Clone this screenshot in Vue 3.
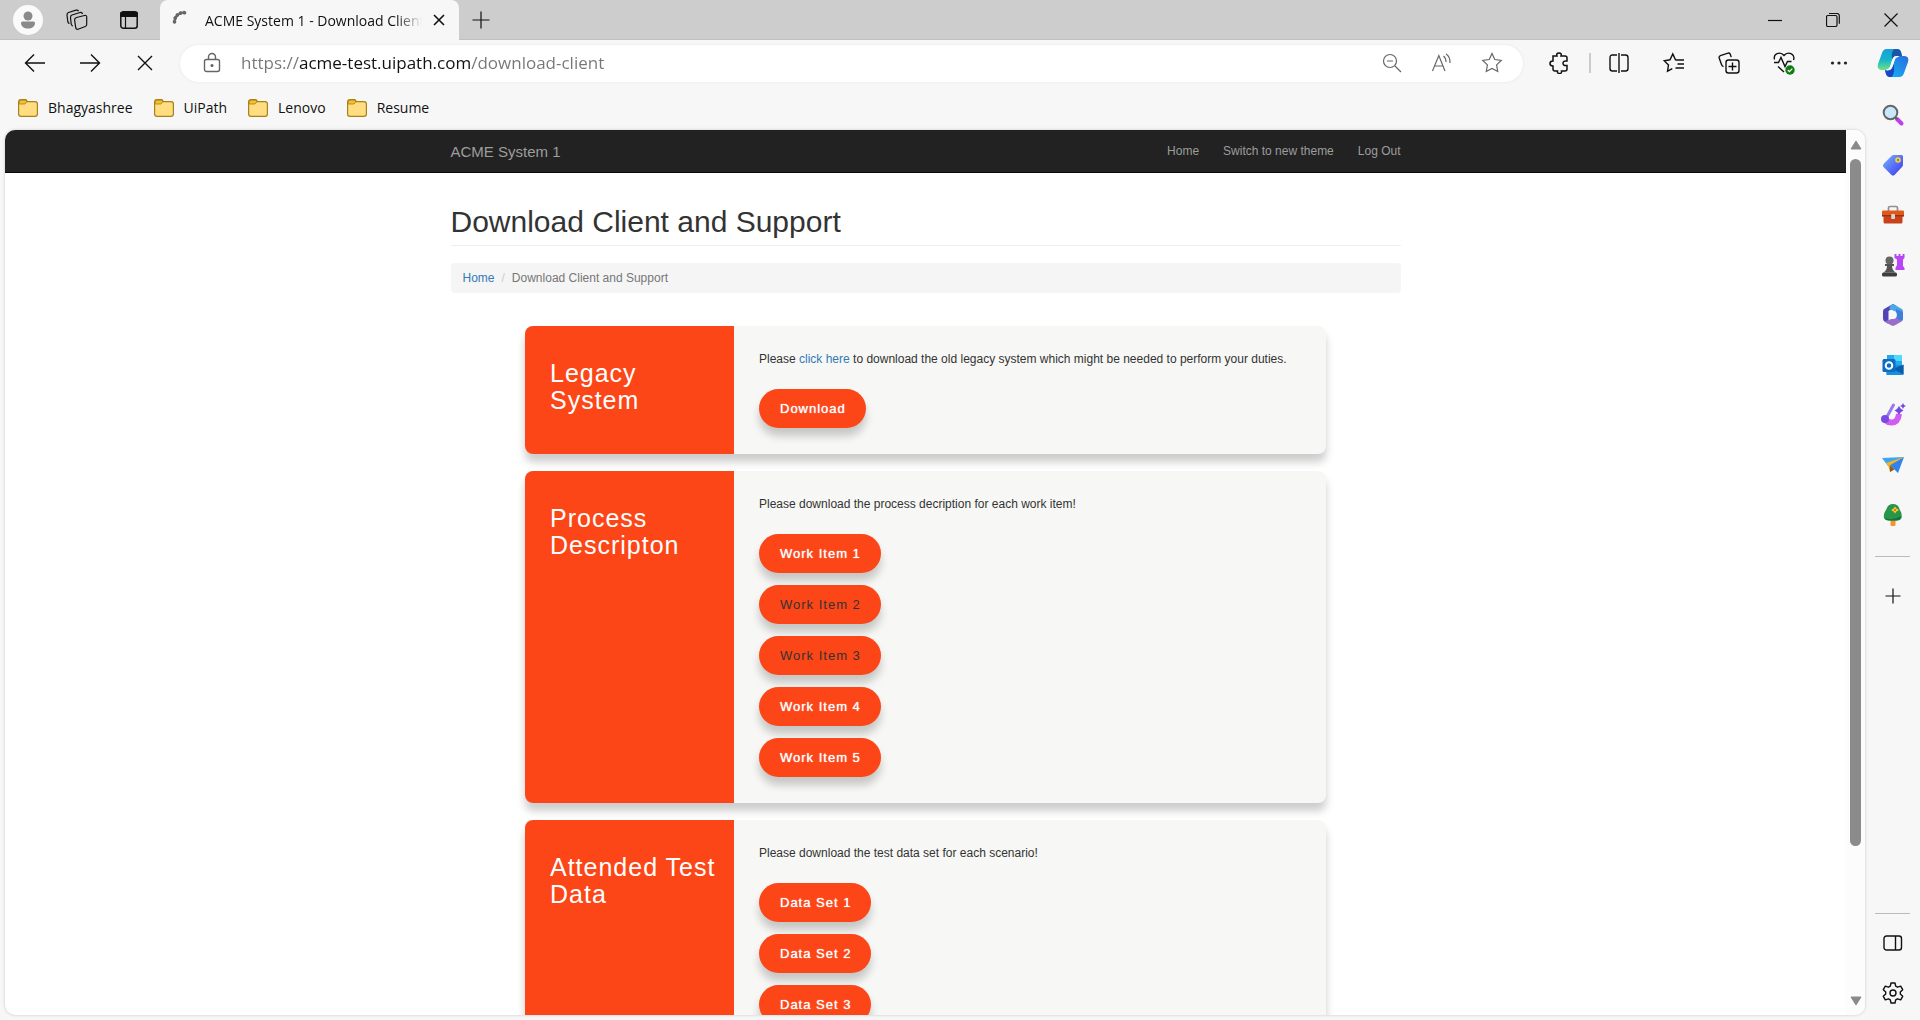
<script setup>
import { ref } from 'vue'

const address = ref('https://acme-test.uipath.com/download-client')
const bookmarks = ['Bhagyashree', 'UiPath', 'Lenovo', 'Resume']
const cards = [
  {
    title: 'Legacy System',
    before: 'Please ',
    link: 'click here',
    after: ' to download the old legacy system which might be needed to perform your duties.',
    items: [{ name: 'Download' }]
  },
  {
    title: 'Process Descripton',
    before: 'Please download the process decription for each work item!',
    items: [
      { name: 'Work Item 1' },
      { name: 'Work Item 2', dim: true },
      { name: 'Work Item 3', dim: true },
      { name: 'Work Item 4' },
      { name: 'Work Item 5' }
    ]
  },
  {
    title: 'Attended Test Data',
    before: 'Please download the test data set for each scenario!',
    items: [{ name: 'Data Set 1' }, { name: 'Data Set 2' }, { name: 'Data Set 3' }]
  }
]
</script>

<template>
  <div class="browser">
    <header class="titlebar">
      <button class="tb avatar" aria-label="Profile">
        <svg width="30" height="30" viewBox="0 0 30 30"><circle cx="15" cy="15" r="15" fill="#fafafa" /><circle cx="15" cy="11" r="4.5" fill="#8a8a8a" /><path d="M9.500 16.500h11q1.500 0 1.500 1.500c0 3.500-3 5.500-7 5.500s-7-2-7-5.500q0-1.500 1.500-1.500z" fill="#8a8a8a" /></svg>
      </button>
      <button class="tb" aria-label="Workspaces">
        <svg class="ico" width="22" height="22" viewBox="0 0 22 22"><path d="M10.500 8.500l8-2q2.200-.5 2.200 1.500v7.500q0 1.500-1.500 2l-6.500 2.500q-2.200 1-2.900-1l-1.200-8q0-2 1.900-2.500z" /><path d="M7 17q-1.500-.2-1.800-2L4.500 8.500q0-2 1.500-2.500l8-2.500q2-.5 2.500 1.500" /><path d="M3.500 14.500q-1.300-.3-1.700-2L1 6q0-2 1.500-2.500l7.500-2.300q2-.4 2.500 1" /></svg>
      </button>
      <button class="tb tabactions" aria-label="Tab actions">
        <svg class="ico" width="20" height="20" viewBox="0 0 20 20"><rect x="1.800" y="1.800" width="16.400" height="16.400" rx="2.500" stroke-width="1.500" /><path d="M2 2.500h16v4H2z" fill="#111" /><path d="M6.500 7v11" /></svg>
      </button>
      <div class="tab">
        <svg class="spin" width="20" height="20" viewBox="0 0 20 20"><path d="M2.500 12A9 9 0 0 1 14 3" fill="none" stroke="#666" stroke-width="3.600" stroke-linecap="round" stroke-dasharray="0.500 3.200" /></svg>
        <span class="tabtitle">ACME System 1 - Download Client</span>
        <button class="tabclose" aria-label="Close tab"><svg class="ico" width="12" height="12" viewBox="0 0 12 12"><path d="M1 1l10 10M11 1L1 11" stroke-width="1.600" /></svg></button>
      </div>
      <button class="newtab" aria-label="New tab"><svg class="ico" width="18" height="18" viewBox="0 0 18 18"><path d="M9 .5v17M.5 9h17" /></svg></button>
      <div class="grow"></div>
      <div class="window">
        <button aria-label="Minimize"><svg class="ico" width="14" height="14" viewBox="0 0 14 14"><path d="M0 7.500h14" /></svg></button>
        <button aria-label="Restore"><svg class="ico" width="14" height="14" viewBox="0 0 14 14"><rect x=".5" y="2.500" width="10.500" height="11" rx="1.500" /><path d="M3 .5h8q2.300 0 2.300 2.300v8" /></svg></button>
        <button aria-label="Close"><svg class="ico" width="14" height="14" viewBox="0 0 14 14"><path d="M.5.5l13 13M13.500.5l-13 13" /></svg></button>
      </div>
    </header>

    <div class="toolbar">
      <div class="navs">
        <button aria-label="Back"><svg class="ico" width="22" height="20" viewBox="0 0 22 20"><path d="M21 10H1.500M10 1.500L1.500 10l8.500 8.500" stroke-width="1.400" /></svg></button>
        <button aria-label="Forward"><svg class="ico" width="22" height="20" viewBox="0 0 22 20"><path d="M1 10h19.500M12 1.500l8.500 8.500-8.500 8.500" stroke-width="1.400" /></svg></button>
        <button aria-label="Stop"><svg class="ico" width="16" height="16" viewBox="0 0 16 16"><path d="M1 1l14 14M15 1L1 15" stroke-width="1.400" /></svg></button>
      </div>
      <div class="pill">
        <svg class="ico grey" width="18" height="22" viewBox="0 0 18 22"><rect x="1.500" y="7.500" width="15" height="12" rx="2" stroke-width="1.400" /><path d="M5.500 7.500V5a3.500 3.500 0 0 1 7 0v2.500" stroke-width="1.400" /><circle cx="9" cy="13.500" r="1" fill="#555" /></svg>
        <input v-model="address" class="url" type="text" aria-label="Address" spellcheck="false">
        <div class="pillicons">
          <button aria-label="Zoom"><svg class="ico grey" width="20" height="20" viewBox="0 0 20 20"><circle cx="8" cy="8" r="6.500" /><path d="M13 13l6 6M5 8h6" /></svg></button>
          <button aria-label="Read aloud"><svg class="ico grey" width="22" height="20" viewBox="0 0 22 20"><path d="M1.500 18L7.800 2.500 14 18M3.500 13h8.500M12.500 3q2.500 2 2.500 6M15 1q4.500 3 4 9" /></svg></button>
          <button aria-label="Favorite"><svg class="ico grey" width="22" height="22" viewBox="0 0 22 22"><path d="M11 1.500l2.800 6 6.500.9-4.700 4.500 1.100 6.600-5.700-3.100-5.700 3.100 1.100-6.600L1.700 8.400l6.500-.9z" /></svg></button>
        </div>
      </div>
      <div class="actions">
        <button aria-label="Extensions"><svg class="ico" width="20" height="22" viewBox="0 0 20 22"><path d="M4 4h4q-1-3 2-3t2 3h4q2 0 2 2v3q-4-.5-4 2.300t4 2.200V17q0 2-2 2h-3.500q.5 2.500-2 2.500T8.500 19H6q-2 0-2-2v-3q-3 0-3-2.500T4 9z" stroke-width="1.500" /></svg></button>
        <i class="vline"></i>
        <button aria-label="Split screen"><svg class="ico" width="20" height="22" viewBox="0 0 20 22"><path d="M8 3H3.500Q1 3 1 5.500v11Q1 19 3.500 19H8M12 3h4.500Q19 3 19 5.500v11q0 2.500-2.500 2.500H12M10 1v20" stroke-width="1.400" /></svg></button>
        <button aria-label="Favorites"><svg class="ico" width="22" height="22" viewBox="0 0 22 22"><path d="M13.500 8l-1-.2L9.800 2 7 7.800l-5.800.9 4.300 4.200-1 6.300 4.800-2.600M12.500 8H21M14.500 12H21M12.500 16H21" stroke-width="1.400" /></svg></button>
        <button aria-label="Collections"><svg class="ico" width="22" height="22" viewBox="0 0 22 22"><rect x="8" y="8" width="13" height="13" rx="2.500" stroke-width="1.400" /><path d="M14.500 10.500v8M10.500 14.500h8M5.500 14.500q-1.300 0-2-2L1.200 6Q.8 4.300 2.400 3.600l7.600-2.500q1.500-.3 2.200 1l1 3" stroke-width="1.400" /></svg></button>
        <button aria-label="Browser essentials"><svg class="ico" width="22" height="24" viewBox="0 0 22 24"><path d="M1.500 8.500Q.5 4.500 3.500 2.800 8 .8 11 4.500q3-3.700 7.500-1.700Q22 5 20.500 9M1 11.500h4.500L8 6.500l4 9 2.500-5h4M5 15.500l6 5.500" stroke-width="1.400" /><circle cx="17" cy="19" r="4.700" fill="#107c10" stroke="none" /><path d="M14.800 19l1.600 1.600 2.900-3" stroke="#fff" /></svg></button>
        <button aria-label="Settings and more"><svg width="18" height="6" viewBox="0 0 18 6"><g fill="#222"><circle cx="2.500" cy="3" r="1.600" /><circle cx="9" cy="3" r="1.600" /><circle cx="15.500" cy="3" r="1.600" /></g></svg></button>
      </div>
      <button class="copilot" aria-label="Copilot">
        <svg width="32" height="30" viewBox="0 0 32 30">
          <defs>
            <linearGradient id="ca" x1="0" y1="0" x2="0" y2="1"><stop offset="0" stop-color="#1a9fe0" /><stop offset=".5" stop-color="#12b5c9" /><stop offset="1" stop-color="#6fe08a" /></linearGradient>
            <linearGradient id="cb" x1="1" y1="0" x2="0" y2="1"><stop offset="0" stop-color="#2b6be0" /><stop offset="1" stop-color="#12b8f5" /></linearGradient>
          </defs>
          <path d="M9.500 1H20q3 0 4 3l1 4h-4q-3 0-4 3l-2.500 8q-1 3-4 3H5q-5.500 0-4-6L5 5q1.300-4 4.500-4z" fill="url(#ca)" />
          <path d="M17 1h3q3 0 4 3l1 4h-4q-3 0-4 3l-1 3q-3-8 1-13z" fill="#1b56a8" />
          <path d="M22.500 29H13q-3 0-4-3l-1-4h3q3 0 4-3l2.500-8q1-3 4-3H27q5.500 0 4 6l-4 11q-1.300 4-4.500 4z" fill="url(#cb)" />
          <path d="M8 22h3q3 0 4-3l1.500-3q2 7-1.500 13h-2q-3 0-4-3z" fill="#1747c5" />
          <path d="M18.500 8.500h3q-3 0-4 3L15 19q-1 3-4 3h-1.500q3-.3 4-3.500l2-6.500q1-3.500 3-3.500z" fill="#fff" stroke="#fff" stroke-width="1" />
        </svg>
      </button>
    </div>

    <div class="lower">
      <div class="main">
        <nav class="bookmarks" aria-label="Bookmarks">
          <a v-for="b in bookmarks" :key="b" href="#">
            <svg width="20" height="18" viewBox="0 0 20 18"><path d="M.6 3Q.6.600 3 .600h5l1.500 2h7.500q2.400 0 2.400 2.400v10q0 2.400-2.400 2.400H3Q.600 17.400.600 15z" fill="#ffdd80" stroke="#a8811a" stroke-width="1.200" /><path d="M1.200 5V3Q1.200 1.200 3 1.200h4.800l1 1.800-1.800 2z" fill="#f2c12e" stroke="#a8811a" stroke-width=".8" /></svg>
            <span>{{ b }}</span>
          </a>
        </nav>
        <div class="frame">
          <div class="page">
            <nav class="sitebar" aria-label="Site">
              <div class="container sitenav">
                <a class="brand" href="#">ACME System 1</a>
                <div class="links"><a href="#">Home</a><a href="#">Switch to new theme</a><a href="#">Log Out</a></div>
              </div>
            </nav>
            <main class="container">
              <h1>Download Client and Support</h1>
              <ol class="crumbs">
                <li><a href="#">Home</a></li>
                <li>Download Client and Support</li>
              </ol>
              <div class="cards">
                <section v-for="c in cards" :key="c.title" class="card">
                  <h2>{{ c.title }}</h2>
                  <div class="body">
                    <p>{{ c.before }}<a v-if="c.link" href="#">{{ c.link }}</a>{{ c.after }}</p>
                    <button v-for="i in c.items" :key="i.name" class="pillbtn" :class="{ dim: i.dim }">{{ i.name }}</button>
                  </div>
                </section>
              </div>
            </main>
          </div>
          <div class="scroll" aria-hidden="true">
            <svg width="12" height="10" viewBox="0 0 12 10"><path d="M6 1l5 8H1z" fill="#8a8a8a" stroke="#8a8a8a" stroke-linejoin="round" /></svg>
            <div class="track"><div class="thumb"></div></div>
            <svg width="12" height="10" viewBox="0 0 12 10"><path d="M6 9L1 1h10z" fill="#8a8a8a" stroke="#8a8a8a" stroke-linejoin="round" /></svg>
          </div>
        </div>
      </div>

      <aside class="side">
        <button aria-label="Search"><svg width="24" height="24" viewBox="0 0 24 24"><path d="M16 16l4.500 4.500" stroke="#c43bf0" stroke-width="4" stroke-linecap="round" /><path d="M14 14l2.500 2.500" stroke="#666" stroke-width="2" /><circle cx="9.500" cy="9.500" r="6.800" fill="#c6e7fc" stroke="#666" stroke-width="2" /></svg></button>
        <button aria-label="Shopping"><svg width="24" height="24" viewBox="0 0 24 24"><defs><linearGradient id="tg" x1="0" y1="0" x2="1" y2="1"><stop offset="0" stop-color="#78b4ff" /><stop offset="1" stop-color="#3a35f0" /></linearGradient></defs><path d="M12.500 2h8q1.500 0 1.500 1.500V12q0 1-1 2l-7.500 8q-1.500 1.200-3 0L2.500 14q-1.200-1.500 0-3l8-8q1-1 2-1z" fill="url(#tg)" /><circle cx="17" cy="7" r="2" fill="#6b82d0" stroke="#ffd429" stroke-width="1.600" /></svg></button>
        <button aria-label="Tools"><svg width="24" height="24" viewBox="0 0 24 24"><path d="M7.500 8V5q0-1.500 1.500-1.500h6q1.500 0 1.500 1.500v3" fill="none" stroke="#8a9096" stroke-width="1.700" /><path d="M2.500 12h19v7q0 1.500-1.500 1.500H4q-1.500 0-1.500-1.500z" fill="#c8421a" /><rect x="1" y="7.500" width="22" height="6" rx="1.200" fill="#e2571c" /><path d="M1 12h22v1.500H1z" fill="#9b2f10" /><rect x="10.200" y="11" width="3.800" height="5" rx=".8" fill="#d5d5d5" /></svg></button>
        <button aria-label="Games"><svg width="24" height="24" viewBox="0 0 24 24"><path d="M13.500 1h2v2h2V1h2v2h2V1h2v4l-1.500 1.500v6.500l1.500 2v2h-9v-2l1.500-3V6.500L13.500 5z" fill="#b945f5" /><circle cx="8.500" cy="7.500" r="4" fill="#666" /><path d="M4 11h9v2h-2q.2 4 3.500 6.500H2.500Q6 17 6 13H4z" fill="#555" /><rect x="1" y="19.500" width="15" height="4" rx="1.500" fill="#3e3e3e" /></svg></button>
        <button aria-label="Microsoft 365"><svg width="24" height="24" viewBox="0 0 24 24"><path d="M12 1L3.500 5.700Q2 6.500 2 8.500v7q0 2 1.500 3l4 2.500V8l8-5z" fill="#5144b8" /><path d="M10 2q2-1.300 4 0l6.500 3.700q1.500.8 1.500 2.800v4L8 5.500z" fill="#4aa8e8" /><path d="M22 10v5.500q0 2-1.500 3L14 22.200q-2 1.200-4 0L3.500 18.500 16 14V8z" fill="#9a6dcc" /><path d="M15 6l7 3v6q0 2-1.500 3L15 15z" fill="#3f7ddc" /><circle cx="12" cy="12" r="3.900" fill="#f7f7f7" /></svg></button>
        <button aria-label="Outlook"><svg width="24" height="24" viewBox="0 0 24 24"><path d="M6 2h15v10H6z" fill="#28a8ea" /><path d="M13 2h8v6h-8z" fill="#50d9ff" /><path d="M4.500 12h18v9q0 1-1 1h-16z" fill="#1490df" /><path d="M22.500 11.500v10L12 16z" fill="#0a5ca8" /><rect x="1.500" y="6" width="13" height="13" rx="1.500" fill="#0a6cc2" /><circle cx="8" cy="12.500" r="3.300" fill="none" stroke="#fff" stroke-width="2" /></svg></button>
        <button aria-label="Designer"><svg width="26" height="26" viewBox="0 0 26 26"><path d="M5 14.500q0 6 6.500 6t7.500-8.500" fill="none" stroke="#d35cf0" stroke-width="6" /><path d="M13.500 3L6.500 15.500" stroke="#9a78f0" stroke-width="3" stroke-linecap="round" /><circle cx="5" cy="17" r="4" fill="#7a4ae0" /><path d="M19 4l1.800 2.700L23.500 8.500l-2.700 1.800L19 13l-1.800-2.700-2.700-1.800 2.700-1.800z" fill="#7448e0" /><path d="M23 1l1 2 2 1-2 1-1 2-1-2-2-1 2-1z" fill="#7448e0" /></svg></button>
        <button aria-label="Drop"><svg width="24" height="24" viewBox="0 0 24 24"><path d="M1 5l22-1-16 9z" fill="#3aa8ee" /><path d="M23 4L7 12l2 7z" fill="#e59a1e" /><path d="M23 4l-6 16-3.500-3.500L9 12.500z" fill="#2f83ee" /><path d="M9 13l4.500 3.500L9 19z" fill="#8d5b17" /><path d="M23 4L5 10l2 3z" fill="#f5b32a" /></svg></button>
        <button aria-label="Tree"><svg width="24" height="24" viewBox="0 0 24 24"><rect x="9.500" y="15" width="5" height="8" rx="1" fill="#f0962a" /><path d="M12 1q5 0 6.500 5 3 5 2 9-.8 2.500-5 2.500H8q-4 0-5-2.500-1-4 2.500-9Q7 1 12 1z" fill="#27954a" /><path d="M4 15q8 3 16-2-.5 4.500-4.500 4.500H8Q5 17.500 4 15z" fill="#13733b" /><path d="M14 3.500l1.500 2 2.500 1.500-2.500 1.500-1.500 2-1.500-2L10 7l2.500-1.500z" fill="#ffc52e" /><circle cx="14" cy="7" r="1" fill="#c66a10" /></svg></button>
        <hr>
        <button class="add" aria-label="Customize"><svg class="ico" width="16" height="16" viewBox="0 0 16 16"><path d="M8 .5v15M.5 8h15" /></svg></button>
        <div class="grow"></div>
        <hr>
        <button aria-label="Sidebar"><svg class="ico" width="20" height="16" viewBox="0 0 20 16"><rect x="1" y="1" width="17.500" height="14" rx="2.500" stroke-width="1.400" /><path d="M12.500 1v14" stroke-width="1.400" /></svg></button>
        <button aria-label="Settings"><svg class="ico" width="22" height="22" viewBox="0 0 22 22"><circle cx="11" cy="11" r="3" stroke-width="1.400" /><path d="M9 1h4l.7 3.200 1.800 1 3.200-1 2 3.500L18.300 10v2l2.400 2.300-2 3.500-3.200-1-1.800 1L13 21H9l-.7-3.200-1.800-1-3.200 1-2-3.500L3.700 12v-2L1.300 7.700l2-3.500 3.200 1 1.800-1z" stroke-width="1.400" stroke-linejoin="round" /></svg></button>
      </aside>
    </div>
  </div>
</template>

<style>
body {
  margin: 0;
}
</style>

<style scoped>
* {
  box-sizing: border-box;
}
.browser {
  display: flex;
  flex-direction: column;
  height: 100vh;
  overflow: hidden;
  background: #f7f7f7;
  color: #111;
  font-family: "Open Sans", "Noto Sans", sans-serif;
  font-size: 14px;
}
button {
  display: flex;
  align-items: center;
  justify-content: center;
  padding: 0;
  border: 0;
  background: none;
  color: inherit;
}
a {
  text-decoration: none;
}
svg {
  display: block;
  flex: none;
}
.ico {
  fill: none;
  stroke: #111;
  stroke-width: 1.2;
}
.ico.grey {
  stroke: #666;
}
.grow {
  flex: 1;
}
.titlebar {
  display: flex;
  height: 40px;
  flex: none;
  background: #cdcdcd;
  box-shadow: inset 0 -1px #c0c0c0;
}
.tb {
  width: 42px;
}
.avatar {
  width: 56px;
}
.tabactions {
  width: 62px;
}
.tab {
  display: flex;
  align-items: center;
  width: 299px;
  padding: 0 12px;
  border-radius: 8px 8px 0 0;
  background: #f7f7f7;
}
.tabtitle {
  flex: 1;
  margin-left: 13px;
  overflow: hidden;
  white-space: nowrap;
  -webkit-mask-image: linear-gradient(90deg, #000 88%, transparent);
  mask-image: linear-gradient(90deg, #000 88%, transparent);
}
.tabclose {
  width: 16px;
  height: 16px;
  margin-left: 9px;
}
.newtab {
  width: 44px;
}
.window {
  display: flex;
}
.window button {
  width: 58px;
}
.toolbar {
  display: flex;
  align-items: center;
  height: 46px;
  flex: none;
}
.navs {
  display: flex;
  padding: 0 8px 0 7px;
}
.navs button {
  width: 55px;
}
.pill {
  display: flex;
  flex: 1;
  align-items: center;
  height: 37px;
  padding: 0 6px 0 23px;
  border-radius: 19px;
  background: #fff;
  box-shadow: 0 0 3px #e4e4e4;
}
.url {
  flex: 1;
  min-width: 0;
  margin-left: 20px;
  padding: 0;
  border: 0;
  outline: 0;
  font: 17px/24px "Open Sans", "Noto Sans", sans-serif;
  color: transparent;
  background: linear-gradient(90deg, #767676 58px, #111 58px, #111 230px, #767676 230px);
  -webkit-background-clip: text;
  background-clip: text;
}
.pillicons {
  display: flex;
}
.pillicons button {
  width: 50px;
}
.actions {
  display: flex;
  align-items: center;
  padding-left: 8px;
}
.actions button {
  width: 55px;
}
.vline {
  width: 2px;
  height: 20px;
  margin-left: 3px;
  background: #ccc;
}
.copilot {
  width: 54px;
}
.lower {
  display: flex;
  flex: 1;
  min-height: 0;
}
.main {
  display: flex;
  flex-direction: column;
  flex: 1;
  min-width: 0;
}
.bookmarks {
  display: flex;
  align-items: center;
  gap: 21px;
  height: 44px;
  flex: none;
  padding: 0 0 1px 18px;
}
.bookmarks a {
  display: flex;
  align-items: center;
  gap: 10px;
  color: #111;
}
.frame {
  display: flex;
  flex: 1;
  min-height: 0;
  margin: 0 0 5px 5px;
  overflow: hidden;
  border-radius: 10px;
  background: #fff;
  box-shadow: 0 0 3px #c4c4c4;
}
.page {
  flex: 1;
  min-width: 0;
  overflow: hidden;
  color: #333;
  font: 12px/17px "Liberation Sans", Arial, sans-serif;
}
.page a {
  color: #337ab7;
}
.container {
  width: 100%;
  max-width: 950px;
  margin: 0 auto;
}
.sitebar {
  background: #222;
  border-bottom: 1px solid #080808;
}
.sitenav {
  display: flex;
  align-items: center;
  justify-content: space-between;
  height: 42px;
}
.page .sitenav a {
  color: #9d9d9d;
}
.brand {
  font-size: 15px;
}
.links {
  display: flex;
  gap: 24px;
}
h1 {
  margin: 32px 0 17px;
  padding-bottom: 7px;
  border-bottom: 1px solid #eee;
  font-size: 30px;
  font-weight: 400;
  line-height: 33px;
}
.crumbs {
  display: flex;
  margin: 0;
  padding: 7px 12px 6px;
  border-radius: 4px;
  background: #f5f5f5;
  color: #777;
  list-style: none;
}
.crumbs li + li::before {
  content: "/";
  padding: 0 7px;
  color: #ccc;
}
.cards {
  display: flex;
  flex-direction: column;
  gap: 17px;
  max-width: 801px;
  margin: 33px auto 0;
}
.card {
  display: flex;
  border-radius: 8px;
  background: #f7f7f5;
  box-shadow: 0 8px 8px rgba(0, 0, 0, 0.2);
}
h2 {
  width: 209px;
  flex: none;
  margin: 0;
  padding: 34px 8px 0 25px;
  border-radius: 8px 0 0 8px;
  background: #fc4618;
  color: #fff;
  font-size: 25px;
  font-weight: 400;
  line-height: 27px;
  letter-spacing: 1px;
}
.body {
  display: flex;
  flex: 1;
  flex-direction: column;
  align-items: flex-start;
  gap: 12px;
  padding: 25px 25px 26px;
}
.body p {
  margin: 0 0 9px;
}
.pillbtn {
  height: 39px;
  padding: 0 20px 0 21px;
  border-radius: 20px;
  background: #fc4618;
  box-shadow: 0 8px 8px rgba(0, 0, 0, 0.2);
  color: #fff;
  font: 13px "Liberation Sans", Arial, sans-serif;
  letter-spacing: 1px;
  text-shadow: 0 0 1px #fff;
}
.pillbtn.dim {
  color: #333;
  text-shadow: none;
}
.scroll {
  display: flex;
  flex-direction: column;
  align-items: center;
  width: 19px;
  padding: 10px 0 9px;
  background: #fcfcfc;
}
.track {
  flex: 1;
  width: 11px;
  padding: 9px 0;
}
.thumb {
  height: 83%;
  border-radius: 6px;
  background: #8b8b8b;
}
.side {
  display: flex;
  flex-direction: column;
  align-items: center;
  width: 55px;
  padding: 4px 0 2px;
}
.side button {
  width: 40px;
  height: 50px;
  flex: none;
}
hr {
  width: 35px;
  height: 1px;
  margin: 16px 0 14px;
  border: 0;
  background: #bbb;
}
.grow + hr {
  margin: 0 0 4px;
}
</style>
